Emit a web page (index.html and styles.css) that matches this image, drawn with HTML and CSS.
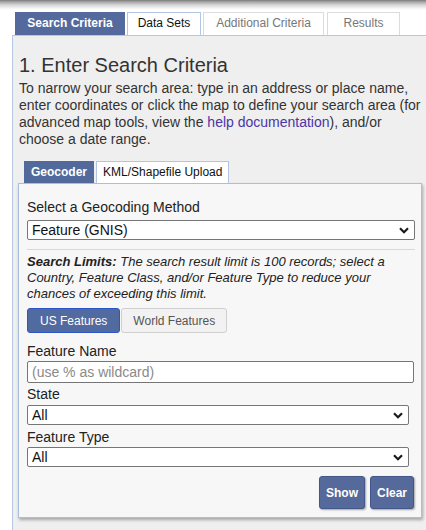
FILE: index.html
```html
<!DOCTYPE html>
<html>
<head>
<meta charset="utf-8">
<link rel="stylesheet" href="styles.css">
</head>
<body>
<div class="topshadow"></div>
<div class="tabs">
  <div class="tab active tab-sc">Search Criteria</div>
  <div class="tab ds tab-ds">Data Sets</div>
  <div class="tab dim tab-ac">Additional Criteria</div>
  <div class="tab dim tab-rs">Results</div>
</div>
<div class="panel">
  <h1 class="title">1. Enter Search Criteria</h1>
  <p class="intro">To narrow your search area: type in an address or place name, enter coordinates or click the map to define your search area (for advanced map tools, view the <a href="#" class="link">help documentation</a>), and/or choose a date range.</p>
  <div class="subtabs">
    <div class="subtab active">Geocoder</div>
    <div class="subtab">KML/Shapefile Upload</div>
  </div>
  <div class="box">
    <label class="lbl first">Select a Geocoding Method</label>
    <div class="sel sel-wide">
      <select class="field"><option>Feature (GNIS)</option></select>
      <svg class="chev" width="10" height="7" viewBox="0 0 10 7"><path d="M1 1.2 L5 5.2 L9 1.2" fill="none" stroke="#1a1a1a" stroke-width="2.2"/></svg>
    </div>
    <hr class="rule">
    <p class="limits"><b>Search Limits:</b> The search result limit is 100 records; select a Country, Feature Class, and/or Feature Type to reduce your chances of exceeding this limit.</p>
    <div class="toggle">
      <button class="tbtn on">US Features</button>
      <button class="tbtn">World Features</button>
    </div>
    <label class="lbl fn">Feature Name</label>
    <input class="field text" placeholder="(use % as wildcard)">
    <label class="lbl st">State</label>
    <div class="sel sel-short">
      <select class="field"><option>All</option></select>
      <svg class="chev" width="10" height="7" viewBox="0 0 10 7"><path d="M1 1.2 L5 5.2 L9 1.2" fill="none" stroke="#1a1a1a" stroke-width="2.2"/></svg>
    </div>
    <label class="lbl ft">Feature Type</label>
    <div class="sel sel-short">
      <select class="field"><option>All</option></select>
      <svg class="chev" width="10" height="7" viewBox="0 0 10 7"><path d="M1 1.2 L5 5.2 L9 1.2" fill="none" stroke="#1a1a1a" stroke-width="2.2"/></svg>
    </div>
    <div class="actions">
      <button class="act">Show</button>
      <button class="act">Clear</button>
    </div>
  </div>
</div>
</body>
</html>
```
FILE: styles.css
```css
* { box-sizing: border-box; }
html, body { margin: 0; padding: 0; background: #fff; overflow: hidden; }
body {
  font-family: "Liberation Sans", Arial, sans-serif;
  color: #222;
  width: 426px;
  height: 530px;
}
.topshadow {
  height: 10px;
  background: linear-gradient(#7a7a7a 0px, #a8a8a8 2px, #d6d6d6 5px, #f2f2f2 8px, #fff 10px);
}
.tabs {
  display: flex;
  gap: 2px;
  padding-left: 15px;
  margin-top: 2px;
  height: 23px;
}
.tab {
  height: 23px;
  line-height: 21px;
  font-size: 12px;
  padding: 0;
  text-align: center;
  background: #fff;
  border: 1px solid #dcdcdc;
  border-bottom: none;
  color: #777;
}
.tab-sc { width: 110px; }
.tab-ds { width: 74px; }
.tab-ac { width: 121px; }
.tab-rs { width: 73px; margin-left: 1px; }
.tab.active {
  background: #54699c;
  border-color: #54699c;
  color: #fff;
  font-weight: bold;
}
.tab.ds { color: #111; border-color: #b3c5e4; }
.panel {
  width: 414px;
  margin-left: 12px;
  background: #efefef;
  border-left: 1px solid #b7c8e4;
  border-top: 1px solid #b7c8e4;
  padding: 17px 0 20px 5px;
}
.title {
  margin: 0 0 0 1px;
  font-size: 20px;
  line-height: 24px;
  font-weight: normal;
  color: #333;
}
.intro {
  margin: 3px 0 0 1px;
  width: 403px;
  font-size: 14px;
  line-height: 17px;
  color: #333;
}
.link { color: #4a35a6; text-decoration: none; }
.subtabs {
  display: flex;
  gap: 2px;
  margin: 13px 0 0 6px;
  height: 22px;
}
.subtab {
  height: 22px;
  line-height: 21px;
  font-size: 12px;
  padding: 0 6px;
  background: #fff;
  border: 1px solid #b3c5e4;
  border-bottom: none;
  color: #111;
}
.subtab.active {
  background: #52699c;
  border-color: #52699c;
  color: #fff;
  font-weight: bold;
}
.box {
  width: 404px;
  background: #f7f7f7;
  border: 1px solid #a9bfe1;
  box-shadow: 1px 2px 3px rgba(0, 0, 0, 0.3);
  padding: 15px 6px 8px 8px;
  display: flex;
  flex-direction: column;
  align-items: flex-start;
}
.lbl {
  display: block;
  font-size: 14px;
  line-height: 17px;
  color: #222;
}
.first { margin-bottom: 4px; }
.sel { position: relative; }
.sel-wide { width: 388px; }
.sel-short { width: 382px; }
.field {
  display: block;
  width: 100%;
  height: 20px;
  font-family: "Liberation Sans", Arial, sans-serif;
  font-size: 14px;
  color: #111;
  background: #fff;
  border: 1px solid #767676;
  border-radius: 2px;
  padding: 0 4px;
  -webkit-appearance: none;
  appearance: none;
  outline: none;
}
.chev { position: absolute; right: 6px; top: 7px; }
.rule {
  width: 388px;
  border: none;
  border-top: 1px solid #d9d9d9;
  margin: 9px 0 4px 0;
}
.limits {
  margin: 0;
  font-size: 13px;
  line-height: 16px;
  font-style: italic;
  color: #222;
}
.toggle {
  display: flex;
  gap: 1px;
  margin-top: 6px;
}
.tbtn {
  height: 25px;
  font-family: "Liberation Sans", Arial, sans-serif;
  font-size: 12px;
  padding: 0 11px;
  background: #f2f2f2;
  color: #555;
  border: 1px solid #cfcfcf;
  border-radius: 3px;
}
.tbtn.on {
  background: #516a9f;
  color: #fff;
  border-color: #2b55c9;
  padding: 0 12px;
}
.fn { margin-top: 10px; }
.text {
  width: 387px;
  height: 22px;
  margin-top: 1px;
}
.text::placeholder { color: #8a8a8a; }
.st { margin-top: 3px; margin-bottom: 2px; }
.ft { margin-top: 4px; margin-bottom: 1px; }
.actions {
  align-self: stretch;
  display: flex;
  justify-content: flex-end;
  gap: 5px;
  margin-top: 9px;
  margin-right: 1px;
}
.act {
  height: 33px;
  padding: 0 6px;
  font-family: "Liberation Sans", Arial, sans-serif;
  font-size: 12px;
  font-weight: bold;
  color: #fff;
  background: #55699b;
  border: 1px solid #43578a;
  border-radius: 3px;
  box-shadow: 1px 1px 2px rgba(0, 0, 0, 0.35);
}
```
